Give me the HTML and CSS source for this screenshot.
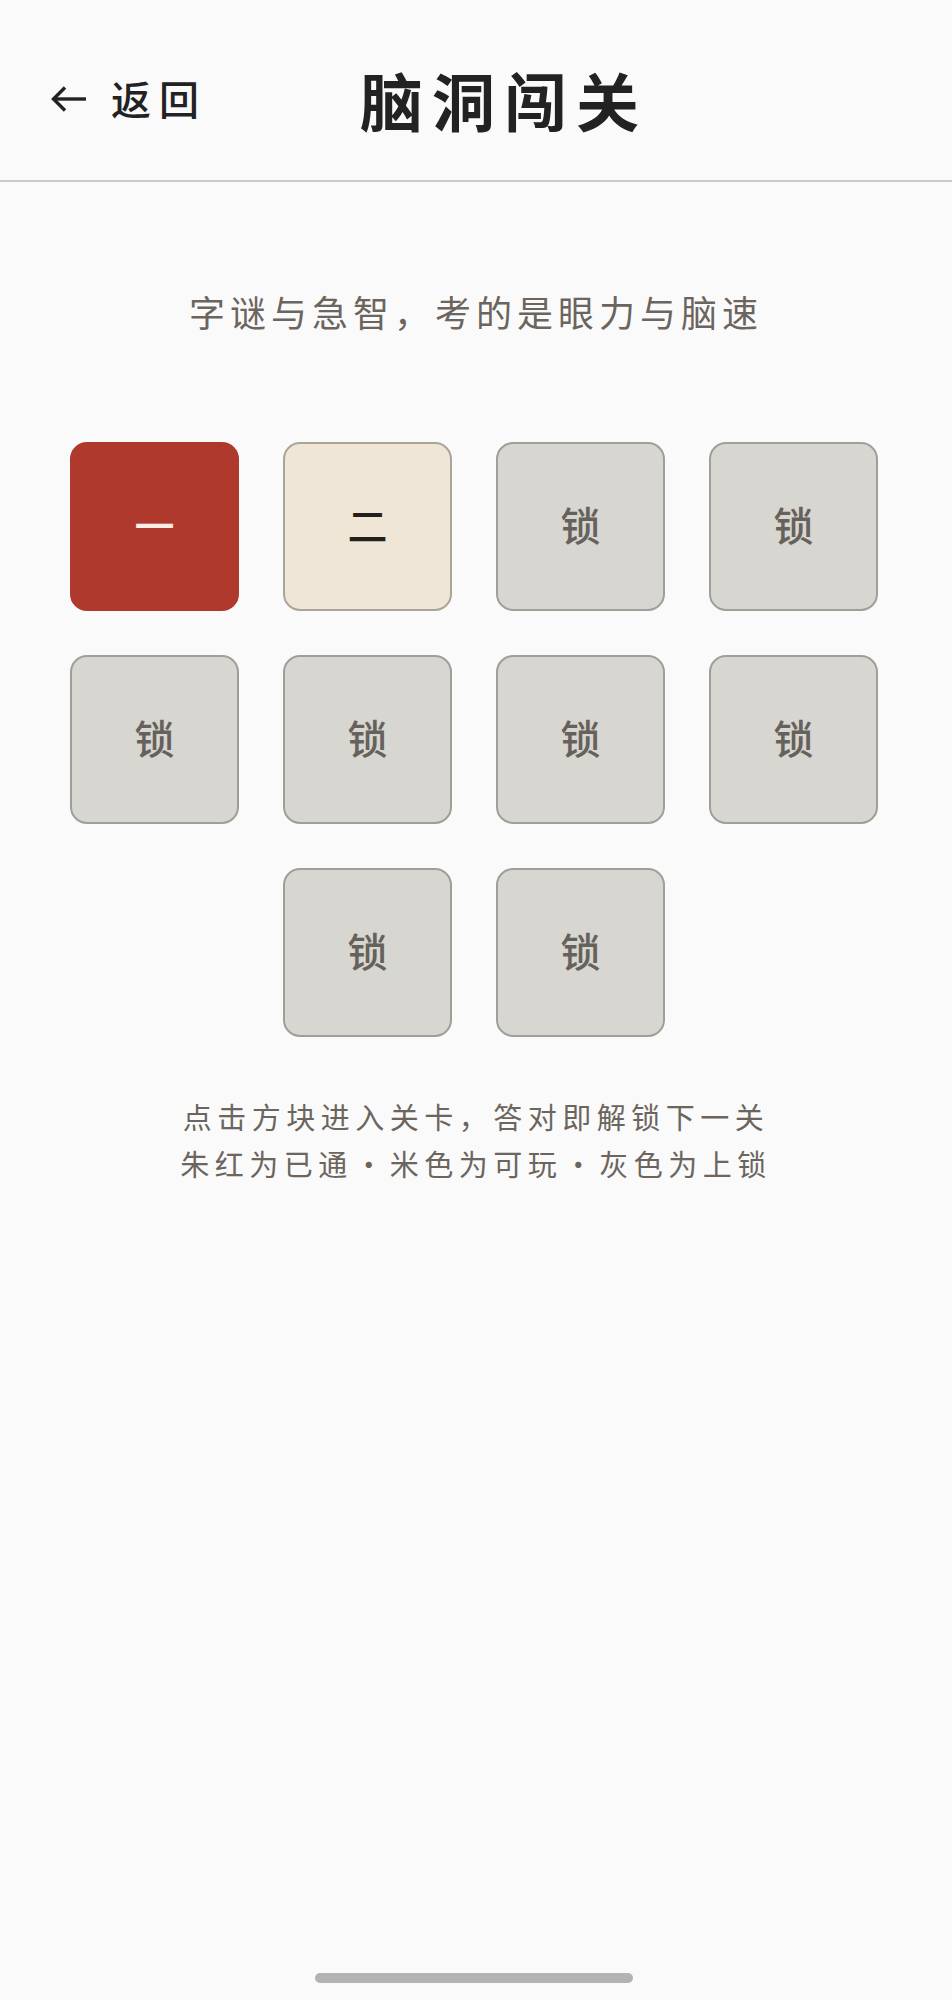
FILE: index.html
```html
<!DOCTYPE html>
<html lang="zh-CN">
<head>
<meta charset="utf-8">
<title>脑洞闯关</title>
<link rel="stylesheet" href="styles.css">
</head>
<body>
<div class="page">
  <header class="topbar">
    <div class="back">
      <svg class="back-icon" width="36" height="26" viewBox="0 0 36 26" fill="none" stroke="#222" stroke-width="3.4" stroke-linecap="butt" stroke-linejoin="miter">
        <path d="M3 13 H35"/>
        <path d="M14 1.5 L2.5 13 L14 24.5"/>
      </svg>
      <span class="back-text">返回</span>
    </div>
    <h1 class="title">脑洞闯关</h1>
  </header>

  <p class="subtitle">字谜与急智，考的是眼力与脑速</p>

  <div class="grid">
    <div class="tile done">一</div>
    <div class="tile open">二</div>
    <div class="tile locked">锁</div>
    <div class="tile locked">锁</div>
    <div class="tile locked">锁</div>
    <div class="tile locked">锁</div>
    <div class="tile locked">锁</div>
    <div class="tile locked">锁</div>
    <div class="tile locked">锁</div>
    <div class="tile locked">锁</div>
  </div>

  <div class="hint">
    <p>点击方块进入关卡，答对即解锁下一关</p>
    <p>朱红为已通<span class="sep">·</span>米色为可玩<span class="sep">·</span>灰色为上锁</p>
  </div>

  <div class="home-bar"></div>
</div>
</body>
</html>
```

FILE: styles.css
```css
* { box-sizing: border-box; }

html, body {
  margin: 0;
  padding: 0;
  background: #fafafa;
}

body {
  font-family: "Noto Sans CJK SC", "Noto Sans", sans-serif;
  color: #222;
}

.page {
  min-height: 2000px;
  display: flex;
  flex-direction: column;
}

.topbar {
  height: 182px;
  border-bottom: 2px solid #cccccc;
  display: flex;
  align-items: center;
  padding-left: 51px;
  padding-top: 16px;
}

.back {
  display: flex;
  align-items: center;
  gap: 24px;
}

.back-icon {
  display: block;
  margin-top: 2px;
}

.back-text {
  font-size: 40px;
  font-weight: 500;
  letter-spacing: 8px;
  color: #222;
  line-height: 1;
}

.title {
  margin: 0 0 0 153px;
  font-size: 63px;
  font-weight: 700;
  letter-spacing: 9px;
  color: #222;
  line-height: 1;
}

.subtitle {
  margin: 104px 0 0;
  text-align: center;
  font-size: 36px;
  letter-spacing: 5px;
  line-height: 50px;
  color: #6b655e;
}

.grid {
  margin: 106px 0 0 calc(50% - 406px);
  width: 808px;
  display: flex;
  flex-wrap: wrap;
  justify-content: center;
  gap: 44px;
}

.tile {
  width: 169px;
  height: 169px;
  border-radius: 17px;
  border: 2px solid #a4a29b;
  display: flex;
  align-items: center;
  justify-content: center;
  font-size: 40px;
  font-weight: 500;
  line-height: 1;
  padding-bottom: 5px;
}

.tile.done {
  background: #b0392d;
  border-color: #b0392d;
  color: #fbeee4;
}

.tile.open {
  background: #efe6d8;
  border-color: #aaa598;
  color: #231f1b;
}

.tile.locked {
  background: #d7d6d1;
  border-color: #a09e98;
  color: #67615b;
}

.hint {
  margin-top: 56px;
  text-align: center;
  color: #6b655e;
  font-size: 29px;
  letter-spacing: 5.5px;
  line-height: 47px;
}

.hint p { margin: 0; }

.sep {
  display: inline-block;
  width: 32px;
  text-align: center;
  letter-spacing: 0;
  margin-right: 5px;
}

.home-bar {
  margin: auto 0 17px calc(50% - 161px);
  width: 318px;
  height: 10px;
  border-radius: 5px;
  background: #b3b3b3;
}
```
